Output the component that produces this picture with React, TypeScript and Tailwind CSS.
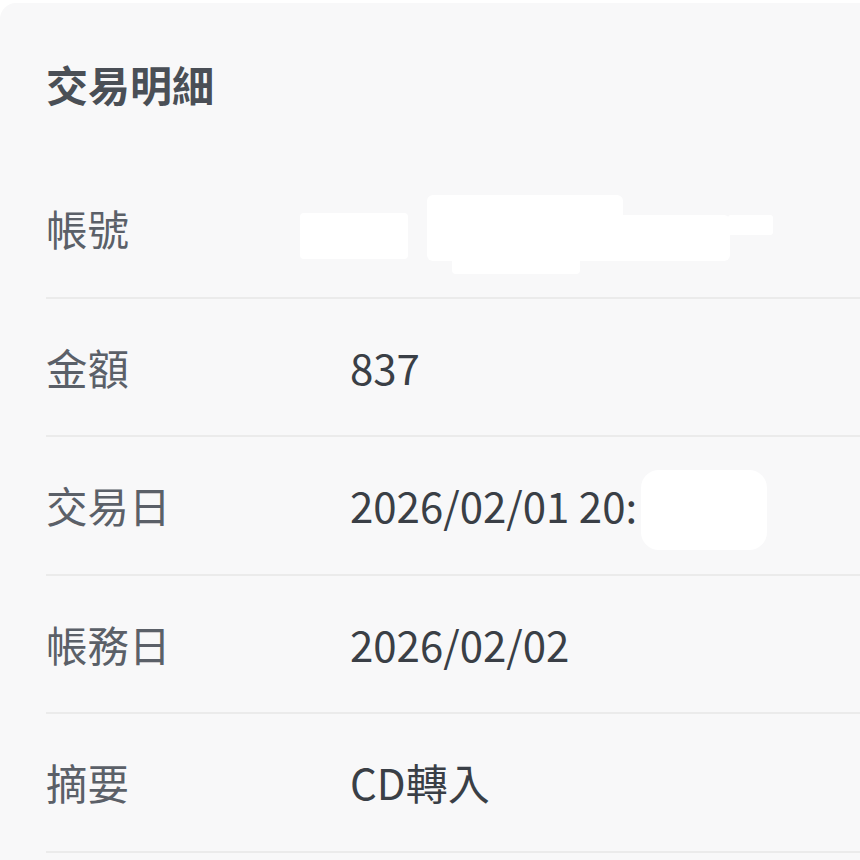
import React from 'react';

const font = { fontFamily: '"Noto Sans CJK TC", "Noto Sans", sans-serif' };

// white patches covering redacted text
function Blob({ className }: { className: string }) {
  return <span className={`absolute bg-white ${className}`} />;
}

export default function App() {
  const rows: { label: string; value: React.ReactNode }[] = [
    {
      label: '帳號',
      value: (
        <span className="relative block h-[60px] w-[480px]">
          <Blob className="left-[-50px] top-[15px] h-[46px] w-[108px] rounded-[4px]" />
          <Blob className="left-[77px] top-[-3px] h-[66px] w-[196px] rounded-[6px]" />
          <Blob className="left-[102px] top-[17px] h-[46px] w-[278px] rounded-[6px]" />
          <Blob className="left-[102px] top-[60px] h-[16px] w-[128px] rounded-[4px]" />
          <Blob className="left-[378px] top-[17px] h-[20px] w-[45px] rounded-[3px]" />
        </span>
      ),
    },
    { label: '金額', value: '837' },
    {
      label: '交易日',
      value: (
        <span className="flex items-center">
          2026/02/01 20:
          <span className="relative ml-[4px] block h-[60px] w-[126px]">
            <Blob className="left-0 top-[-5px] h-[80px] w-[126px] rounded-[18px]" />
          </span>
        </span>
      ),
    },
    { label: '帳務日', value: '2026/02/02' },
    { label: '摘要', value: 'CD轉入' },
  ];

  return (
    <div className="h-[860px] w-[860px] overflow-hidden bg-white" style={font}>
      <div className="mt-[3px] w-[900px] rounded-tl-[16px] bg-[#f8f8f9] pb-[40px] pt-[51px]">
        <h1 className="pl-[46px] text-[42px] font-bold leading-[60px] text-[#4a4f56]">交易明細</h1>
        <div className="ml-[46px] mt-[46px]">
          {rows.map((row) => (
            <div
              key={row.label}
              className="flex h-[138.5px] items-center border-b-2 border-[#ebebeb]"
            >
              <div className="w-[304px] shrink-0 text-[41.5px] leading-[60px] text-[#5b6068]">
                {row.label}
              </div>
              <div className="text-[42px] leading-[60px] text-[#3a3f46]">{row.value}</div>
            </div>
          ))}
        </div>
      </div>
    </div>
  );
}
